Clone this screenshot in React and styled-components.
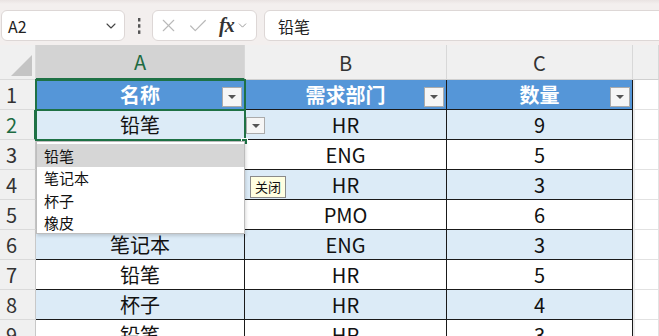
import { Fragment } from "react";
import styled, { createGlobalStyle } from "styled-components";
import { X, Check, ChevronDown } from "lucide-react";

const GlobalStyle = createGlobalStyle`
  html, body {
    margin: 0;
    padding: 0;
    overflow: hidden;
    background: #f3efee;
  }
  * { box-sizing: border-box; }
`;

const FONT = `"Noto Sans CJK SC", "Liberation Sans", sans-serif`;

const Page = styled.div`
  width: 659px;
  height: 336px;
  overflow: hidden;
  font-family: ${FONT};
`;

// ---------- formula bar ----------
const FormulaBar = styled.div`
  height: 45px;
  display: flex;
  align-items: center;
  padding: 0 0 0 1px;
  background: linear-gradient(#e9e3e2 0, #f3efee 4px, #f3efee 100%);
`;

const Box = styled.div`
  height: 31px;
  margin-top: 6px;
  display: flex;
  align-items: center;
  background: #fff;
  border: 1px solid #ddd7d6;
  border-radius: 6px;
`;

const NameBox = styled(Box)`
  width: 124px;
  justify-content: space-between;
  padding: 0 5px 0 6px;
  font-size: 16px;
  color: #222;
`;

const Dots = styled.div`
  width: 27px;
  margin-top: 6px;
  display: flex;
  justify-content: center;
`;

const FxBox = styled(Box)`
  width: 105px;
  padding: 0 0 0 5px;
  gap: 8px;
  color: #b9b9b9;
`;

const Fx = styled.span`
  font-family: "Liberation Serif", serif;
  font-style: italic;
  font-weight: 700;
  font-size: 20px;
  color: #333;
  margin-left: 2px;
  letter-spacing: -1px;
`;

const FormulaInput = styled(Box)`
  flex: 1;
  margin-left: 7px;
  margin-right: -10px;
  padding-left: 13px;
  font-size: 16px;
  color: #222;
`;

// ---------- sheet ----------
const Sheet = styled.div`
  position: relative;
  display: grid;
  grid-template-columns: 36px 209px 202px 186px 1fr;
  grid-template-rows: 35px repeat(9, 30px);
  background: #fff;
`;

const Corner = styled.div`
  background: #f0f0f0;
  border-right: 1px solid #dadada;
  border-bottom: 1px solid #dadada;
  position: relative;
  &::after {
    content: "";
    position: absolute;
    right: 3px;
    bottom: 3px;
    width: 21px;
    height: 21px;
    background: #c4c4c4;
    clip-path: polygon(100% 0, 100% 100%, 0 100%);
  }
`;

const ColHead = styled.div`
  display: flex;
  align-items: center;
  justify-content: center;
  font-size: 20px;
  background: ${(p) => (p.$active ? "#d3d3d3" : "#f0f0f0")};
  color: ${(p) => (p.$active ? "#1d6b42" : "#333")};
  border-right: 1px solid #d8d8d8;
  border-bottom: ${(p) => (p.$active ? "2px solid #1e7145" : "1px solid #d0d0d0")};
`;

const RowHead = styled.div`
  display: flex;
  align-items: center;
  padding-left: 6px;
  font-size: 20px;
  background: #f0f0f0;
  color: ${(p) => (p.$active ? "#1d6b42" : "#333")};
  border-right: ${(p) => (p.$active ? "2px solid #1e7145" : "1px solid #c8c8c8")};
  border-bottom: 1px solid #dadada;
`;

const bandBg = { head: "#5596d8", even: "#dcebf7", odd: "#ffffff" };

const Cell = styled.div`
  position: relative;
  display: flex;
  align-items: center;
  justify-content: center;
  font-size: 20px;
  line-height: 1;
  padding-top: 1px;
  background: ${(p) => bandBg[p.$band]};
  color: ${(p) => (p.$band === "head" ? "#fff" : "#111")};
  font-weight: ${(p) => (p.$band === "head" ? 700 : 400)};
  border-right: 1px solid #1a1a1a;
  border-bottom: 1px solid #1a1a1a;
`;

const EmptyCell = styled.div`
  border-right: 1px solid #e2e2e2;
  border-bottom: 1px solid #e2e2e2;
  border-left: 2px solid #ececec;
  background: #fff;
`;

const ArrowButton = styled.div`
  position: absolute;
  width: ${(p) => p.$w || 20}px;
  height: ${(p) => p.$h || 20}px;
  background: #f6f6f6;
  border: 1px solid #ababab;
  display: flex;
  align-items: center;
  justify-content: center;
  &::after {
    content: "";
    border-left: 4px solid transparent;
    border-right: 4px solid transparent;
    border-top: 4px solid #555;
  }
`;

const FilterButton = styled(ArrowButton)`
  right: 2px;
  bottom: 2px;
`;

const ValidationButton = styled(ArrowButton)`
  left: 246px;
  top: 72px;
  z-index: 3;
`;

const SelectFrame = styled.div`
  position: absolute;
  left: 35px;
  width: 211px;
  top: ${(p) => p.$top}px;
  height: 32px;
  border: 2px solid #1e7145;
  pointer-events: none;
  z-index: 2;
`;

const FillHandle = styled.div`
  position: absolute;
  left: 241px;
  top: 93px;
  width: 7px;
  height: 7px;
  background: #1e7145;
  border: 1px solid #fff;
  z-index: 3;
`;

const Dropdown = styled.div`
  position: absolute;
  left: 36px;
  top: 96px;
  width: 209px;
  height: 93px;
  padding-top: 2px;
  background: #fff;
  border: 1px solid #bdbdbd;
  box-shadow: 1px 2px 3px rgba(0, 0, 0, 0.15);
  z-index: 4;
`;

const Option = styled.div`
  height: 22.5px;
  display: flex;
  align-items: center;
  padding-left: 7px;
  font-size: 15px;
  color: #111;
  background: ${(p) => (p.$hover ? "#d6d6d6" : "transparent")};
`;

const Tooltip = styled.div`
  position: absolute;
  left: 250px;
  top: 131px;
  padding: 1px 4px;
  font-size: 13px;
  line-height: 18px;
  background: #ffffe1;
  border: 1px solid #8a8a8a;
  color: #111;
  z-index: 4;
`;

const headers = ["名称", "需求部门", "数量"];
const rows = [
  ["铅笔", "HR", 9],
  ["笔记本", "ENG", 5],
  ["杯子", "HR", 3],
  ["橡皮", "PMO", 6],
  ["笔记本", "ENG", 3],
  ["铅笔", "HR", 5],
  ["杯子", "HR", 4],
  ["铅笔", "HR", 3],
];
const options = ["铅笔", "笔记本", "杯子", "橡皮"];

function VDots() {
  return (
    <svg width="4" height="16" viewBox="0 0 4 16">
      <rect x="1" y="0" width="2.4" height="3.5" fill="#555" />
      <rect x="1" y="6.2" width="2.4" height="3.5" fill="#555" />
      <rect x="1" y="12.4" width="2.4" height="3.5" fill="#555" />
    </svg>
  );
}

export default function App() {
  return (
    <Page>
      <GlobalStyle />
      <FormulaBar>
        <NameBox>
          <span>A2</span>
          <ChevronDown size={16} strokeWidth={1.6} color="#444" />
        </NameBox>
        <Dots>
          <VDots />
        </Dots>
        <FxBox>
          <X size={21} strokeWidth={1.3} />
          <Check size={22} strokeWidth={1.3} />
          <Fx>fx</Fx>
          <ChevronDown size={13} strokeWidth={1.5} color="#888" style={{ marginLeft: -6 }} />
        </FxBox>
        <FormulaInput>铅笔</FormulaInput>
      </FormulaBar>

      <Sheet>
        <Corner />
        <ColHead $active>A</ColHead>
        <ColHead>B</ColHead>
        <ColHead>C</ColHead>
        <ColHead />

        <RowHead>1</RowHead>
        {headers.map((h) => (
          <Cell key={h} $band="head">
            {h}
            <FilterButton />
          </Cell>
        ))}
        <EmptyCell />

        {rows.map((r, i) => (
          <Fragment key={i}>
            <RowHead $active={i === 0}>{i + 2}</RowHead>
            {r.map((v, j) => (
              <Cell key={j} $band={i % 2 === 0 ? "even" : "odd"}>
                {v}
              </Cell>
            ))}
            <EmptyCell />
          </Fragment>
        ))}

        <SelectFrame $top={34} />
        <SelectFrame $top={64} />
        <FillHandle />
        <ValidationButton $w={19} $h={17} />

        <Dropdown>
          {options.map((o, i) => (
            <Option key={o} $hover={i === 0}>
              {o}
            </Option>
          ))}
        </Dropdown>
        <Tooltip>关闭</Tooltip>
      </Sheet>
    </Page>
  );
}
